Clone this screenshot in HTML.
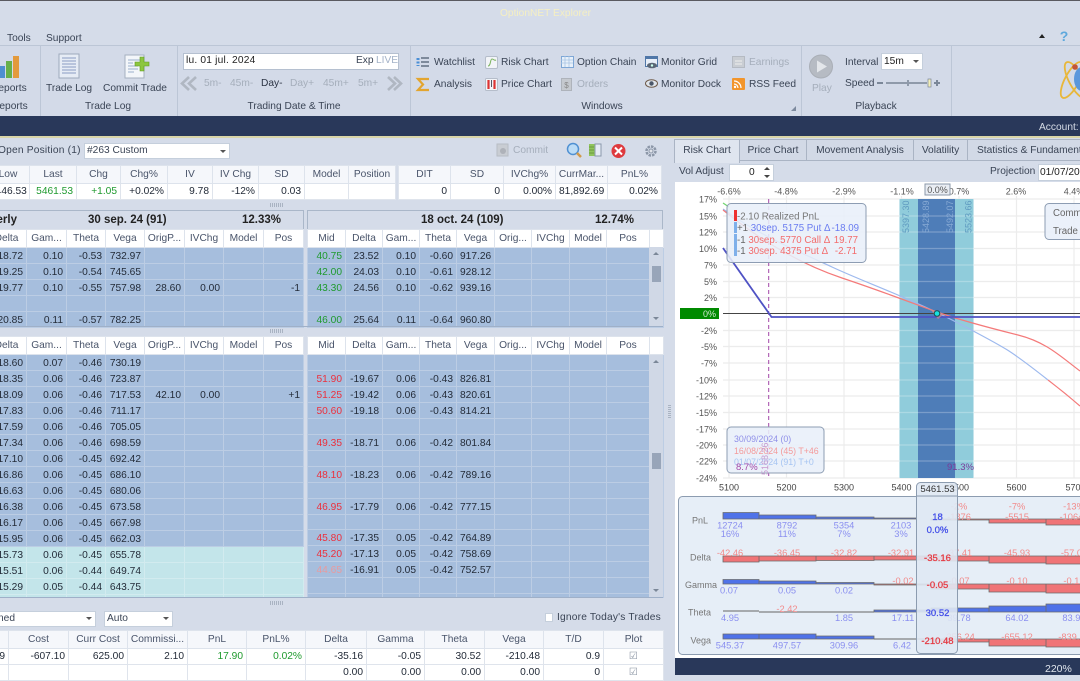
<!DOCTYPE html>
<html><head><meta charset="utf-8"><style>
*{box-sizing:border-box}
html,body{margin:0;padding:0}
body{width:1080px;height:675px;overflow:hidden;position:relative;background:#d5dce9;font:10.2px/12px "Liberation Sans",sans-serif;color:#3a4455}
.t{position:absolute;white-space:nowrap;line-height:12px;margin-top:2px}
.b{position:absolute}
.gr{color:#a5aebb}
.c{transform:translateX(-50%)}
table{position:absolute;border-collapse:collapse;table-layout:fixed;font:10.2px/12px "Liberation Sans",sans-serif;color:#232b38}
td,th{padding:0 3px;white-space:nowrap;overflow:hidden;height:16px;text-align:right;font-weight:normal}
th{text-align:center;background:#fff;color:#49546a;border:1px solid #dde3ec;height:18px;padding:0 1px}
.ch td{background:#a6bedd;border:1px solid #bccde4;padding-top:2px}
.ch2 td{padding-top:3px}
.ch tr.k td{background:#c3e5ea;border-color:#d2ebef}
.ch tr.s td{height:15px}
.ch tr.e td{height:5px;padding:0}
.w td{background:#fff;border:1px solid #dfe4ec}
.w th{background:#f5f7fb}
.g{color:#1f9a2e}.r{color:#ec2f3c}.p{color:#e99a9e}
.box{position:absolute;background:#fff;border:1px solid #b5c0d0}
.sp{position:absolute;width:13px;height:4px;background:repeating-linear-gradient(90deg,#a9b3c2 0 1px,transparent 1px 2px)}
.tab{position:absolute;top:139px;height:22px;border:1px solid #aab4c4;border-left:0;background:#d2d9e6;text-align:center;line-height:22px;color:#3a4455}
.tt{position:absolute;background:#d5dce9;border:1px solid #aab7c9;height:20px}
</style></head><body>

<!-- title / menu -->
<div class="b" style="left:0;top:0;width:1080px;height:1px;background:#5a5a60"></div>
<div class="t" style="left:500px;top:6px;color:#f5efc2">OptionNET Explorer</div>
<div class="t" style="left:7px;top:31px">Tools</div>
<div class="t" style="left:46px;top:31px">Support</div>
<div class="b" style="left:1039px;top:34px;border:3.5px solid transparent;border-top:0;border-bottom:4px solid #222"></div>
<svg class="b" style="left:1057px;top:29px" width="14" height="15"><text x="7" y="12" font-family="Liberation Sans" font-size="14" font-weight="bold" text-anchor="middle" fill="#5da8dc">?</text></svg>

<!-- ribbon -->
<div class="b" style="left:0;top:45px;width:1080px;height:1px;background:#bcc6d6"></div>
<div class="b" style="left:0;top:46px;width:1080px;height:70px;background:#d3dae8"></div>
<div class="b" style="left:40px;top:46px;width:1px;height:70px;background:#bcc6d6"></div>
<div class="b" style="left:177px;top:46px;width:1px;height:70px;background:#bcc6d6"></div>
<div class="b" style="left:410px;top:46px;width:1px;height:70px;background:#bcc6d6"></div>
<div class="b" style="left:801px;top:46px;width:1px;height:70px;background:#bcc6d6"></div>
<div class="b" style="left:951px;top:46px;width:1px;height:70px;background:#bcc6d6"></div>

<!-- ribbon icons -->
<svg class="b" style="left:0;top:0" width="1080" height="116">
<rect x="0" y="66" width="5" height="12" fill="#4f8fd0"/><rect x="6" y="61" width="6" height="17" fill="#68b04a"/><rect x="13" y="56" width="6" height="22" fill="#e39a3c"/>
<rect x="59" y="54" width="20" height="24" fill="#e6ecf5" stroke="#9eaabd"/>
<path d="M62 58h14M62 61h14M62 64h14M62 67h14M62 70h14M62 73h14" stroke="#8a9dc4"/>
<rect x="125" y="55" width="19" height="23" fill="#f3f6fa" stroke="#a5b0c0"/>
<path d="M128 60h13M128 63h5M128 66h10M128 69h10M128 72h6" stroke="#9bb0cc"/>
<path d="M140 57h4v5h5v4h-5v5h-4v-5h-5v-4h5z" fill="#8cc63f" stroke="#5f9a23" stroke-width=".6"/>
<!-- date icons -->
<rect x="327.500" y="56.500" width="10" height="10" fill="#f6f0ee" stroke="#a8b6cc"/><rect x="327" y="56" width="11" height="3" fill="#e87d6e"/><path d="M329 61h6M329 63h6" stroke="#8da7d4"/>
<rect x="342" y="56" width="11" height="11" fill="#b6bcc6"/><path d="M345 58v7M350 58v7M345 61h5" stroke="#fff"/>
<path d="M196 77l-7 6.500 7 6.500M189 77l-7 6.500 7 6.500" fill="none" stroke="#b0b7c2" stroke-width="2.600"/>
<path d="M388 77l7 6.500-7 6.500M394 77l7 6.500-7 6.500" fill="none" stroke="#b0b7c2" stroke-width="2.600"/>
<!-- watchlist -->
<path d="M418 58v8" stroke="#4a8fd6" stroke-width="3" stroke-dasharray="2 1.500"/><path d="M421 58h8M421 62h8M421 66h8" stroke="#4b5a6d" stroke-width="1.200"/>
<path d="M429 79h-11l5 5.500-5 5.500h11" fill="none" stroke="#e3a52f" stroke-width="2.200"/>
<!-- risk chart -->
<rect x="485.500" y="56.500" width="12" height="12" rx="1.500" fill="#f2f4f8" stroke="#b5bdca"/><path d="M488 66c3 0 2-7 4-7s2 2 4 1" fill="none" stroke="#7bb25e"/>
<rect x="485.500" y="78.500" width="12" height="12" rx="1" fill="#f2f4f8" stroke="#b5bdca"/><path d="M488.500 80v9M494.500 80v9" stroke="#d33" stroke-width="2.200"/><path d="M491.500 80v7" stroke="#556" />
<!-- option chain -->
<rect x="561.500" y="56.500" width="12" height="11" fill="#e7f0fa" stroke="#7ea7d6"/><path d="M561 60h12M561 63h12M565 56v11M569 56v11" stroke="#a8c3e3" stroke-width=".8"/>
<rect x="561.500" y="78.500" width="10" height="12" fill="#c5c9cf" stroke="#aeb3bb"/><text x="566.500" y="88" font-size="8" text-anchor="middle" fill="#888" font-family="Liberation Sans">$</text>
<!-- monitor grid -->
<rect x="645.500" y="56.500" width="12" height="10" fill="#e7eef8" stroke="#5077a8"/><rect x="645" y="56" width="13" height="3" fill="#5077a8"/><ellipse cx="652" cy="65.500" rx="5" ry="2.800" fill="#5a6675"/><circle cx="652" cy="65.500" r="1.200" fill="#cfe"/>
<ellipse cx="651.500" cy="83.500" rx="6" ry="3.800" fill="#dfe4ea" stroke="#6e5a49"/><circle cx="651.500" cy="83.500" r="2.200" fill="#4a5668"/>
<!-- earnings -->
<rect x="732.500" y="56.500" width="12" height="11" fill="#c9cdd3" stroke="#b5bac2"/><path d="M735 61h7M735 64h7" stroke="#eee"/>
<rect x="732" y="78" width="13" height="12" rx="1" fill="#f2952b"/><circle cx="735" cy="87" r="1.200" fill="#fff"/><path d="M734 84a4 4 0 0 1 4 4M734 81a7 7 0 0 1 7 7" fill="none" stroke="#fff" stroke-width="1.200"/>
<path d="M796 106v5h-5z" fill="#7d8a9e"/>
<!-- play -->
<circle cx="821" cy="66.500" r="11.500" fill="#b6bbc3" stroke="#a9aeb6"/><path d="M817 60.500l10 6-10 6z" fill="#e3e6ea"/>
<path d="M877 83h6" stroke="#7b8798" stroke-width="2"/><path d="M886 83h41" stroke="#8f9aaa" stroke-width="2"/><rect x="907" y="80" width="2" height="6" fill="#8f9aaa"/><rect x="928" y="79" width="3" height="8" fill="#f3efb8" stroke="#7b8798" stroke-width=".7"/>
<path d="M934 83h6M937 80v6" stroke="#7b8798" stroke-width="2"/>
<!-- logo -->
<ellipse cx="1072" cy="80" rx="20" ry="7" fill="none" stroke="#e8b73a" stroke-width="1.800" transform="rotate(-62 1072 80)"/>
<ellipse cx="1076" cy="80" rx="20" ry="7" fill="none" stroke="#e8b73a" stroke-width="1.800" transform="rotate(62 1076 80)"/>
<ellipse cx="1082" cy="79" rx="8" ry="12" fill="#5a97dc"/><circle cx="1075" cy="67" r="2.800" fill="#c2543a"/>
</svg>

<div class="t" style="left:-9px;top:81px">Reports</div><div class="t" style="left:-8px;top:99px">Reports</div>
<div class="t" style="left:46px;top:81px">Trade Log</div><div class="t" style="left:103px;top:81px">Commit Trade</div>
<div class="t c" style="left:108px;top:99px">Trade Log</div>
<div class="box" style="left:183px;top:53px;width:216px;height:17px"></div>
<div class="t" style="left:186px;top:53px;color:#222;letter-spacing:.2px">lu. 01 jul. 2024</div>
<div class="t" style="left:356px;top:53px">Exp</div><div class="t" style="left:376px;top:53px;color:#a3b2c8">LIVE</div>
<div class="t gr" style="left:204px;top:76px">5m-</div><div class="t gr" style="left:230px;top:76px">45m-</div><div class="t" style="left:261px;top:76px;color:#2c3444">Day-</div><div class="t gr" style="left:290px;top:76px">Day+</div><div class="t gr" style="left:323px;top:76px">45m+</div><div class="t gr" style="left:358px;top:76px">5m+</div>
<div class="t c" style="left:294px;top:99px">Trading Date &amp; Time</div>
<div class="t" style="left:434px;top:55px">Watchlist</div><div class="t" style="left:434px;top:77px">Analysis</div>
<div class="t" style="left:501px;top:55px">Risk Chart</div><div class="t" style="left:501px;top:77px">Price Chart</div>
<div class="t" style="left:577px;top:55px">Option Chain</div><div class="t gr" style="left:577px;top:77px">Orders</div>
<div class="t" style="left:661px;top:55px">Monitor Grid</div><div class="t" style="left:661px;top:77px">Monitor Dock</div>
<div class="t gr" style="left:749px;top:55px">Earnings</div><div class="t" style="left:749px;top:77px">RSS Feed</div>
<div class="t c" style="left:602px;top:99px">Windows</div>
<div class="t gr" style="left:812px;top:81px">Play</div>
<div class="t" style="left:845px;top:55px">Interval</div><div class="t" style="left:845px;top:76px">Speed</div>
<div class="box" style="left:881px;top:53px;width:42px;height:17px;border-color:#c5cfdc"></div><div class="t" style="left:884px;top:54px;color:#222">15m</div>
<div class="b" style="left:913px;top:60px;border:3px solid transparent;border-top:3px solid #555;border-bottom:0"></div>
<div class="t c" style="left:876px;top:99px">Playback</div>

<!-- navy bar -->
<div class="b" style="left:0;top:116px;width:1080px;height:20px;background:#29385a"></div>
<div class="b" style="left:0;top:136px;width:1080px;height:2px;background:#d9d5a8"></div>
<div class="t" style="left:1039px;top:120px;color:#d6dce6">Account:</div>

<!-- position toolbar -->
<div class="t" style="left:-2px;top:143px;letter-spacing:.2px">Open Position (1)</div>
<div class="box" style="left:84px;top:143px;width:146px;height:16px;border-color:#c5cfdc"></div>
<div class="t" style="left:87px;top:143px">#263 Custom</div>
<div class="b" style="left:220px;top:150px;border:3px solid transparent;border-top:3px solid #555;border-bottom:0"></div>
<svg class="b" style="left:490px;top:140px" width="175" height="22">
<rect x="7" y="4" width="11" height="12" fill="#c9cdd3" stroke="#b8bdc4"/><circle cx="13" cy="11" r="3" fill="#aeb2b9"/>
<circle cx="83" cy="9" r="5.500" fill="#bcdcf6" stroke="#4f90d2" stroke-width="1.500"/><path d="M87 13l4 4" stroke="#d19a4a" stroke-width="2.500"/>
<rect x="99" y="4" width="6" height="12" fill="#8fc45c"/><rect x="105" y="4" width="6" height="12" fill="#e6ecf5" stroke="#8a98ac"/><path d="M99 7h5M99 10h5M99 13h5" stroke="#6e9a3f"/>
<circle cx="128.500" cy="11" r="7" fill="#de3a3e"/><path d="M125 7.500l7 7M132 7.500l-7 7" stroke="#fff" stroke-width="2"/>
<circle cx="161" cy="11" r="4.500" fill="none" stroke="#8c97a8" stroke-width="2.500" stroke-dasharray="2.500 1"/><circle cx="161" cy="11" r="2" fill="#dfe3ea" stroke="#8c97a8"/>
</svg>
<div class="t gr" style="left:513px;top:143px">Commit</div>

<!-- summary tables -->
<table class="w" style="left:-14px;top:165px;width:409px">
<colgroup><col style="width:43px"><col style="width:47px"><col style="width:44px"><col style="width:47px"><col style="width:45px"><col style="width:46px"><col style="width:46px"><col style="width:44px"><col style="width:47px"></colgroup>
<tr><th>Low<th>Last<th>Chg<th>Chg%<th>IV<th>IV Chg<th>SD<th>Model<th>Position</tr>
<tr><td>5446.53<td class="g">5461.53<td class="g">+1.05<td>+0.02%<td>9.78<td>-12%<td>0.03<td><td></tr>
</table>
<table class="w" style="left:398px;top:165px;width:263px">
<colgroup><col style="width:52px"><col style="width:53px"><col style="width:52px"><col style="width:52px"><col style="width:54px"></colgroup>
<tr><th>DIT<th>SD<th>IVChg%<th>CurrMar...<th>PnL%</tr>
<tr><td>0<td>0<td>0.00%<td>81,892.69<td>0.02%</tr>
</table>
<div class="sp" style="left:270px;top:203px"></div>

<!-- chain titles -->
<div class="tt" style="left:-2px;top:210px;width:306px"></div>
<div class="tt" style="left:307px;top:210px;width:356px"></div>
<div class="t" style="right:1063px;top:212px;font-weight:bold;font-size:11.500px;color:#222">Quarterly</div>
<div class="t" style="left:88px;top:212px;font-weight:bold;font-size:11.500px;color:#222">30 sep. 24 (91)</div>
<div class="t" style="left:242px;top:212px;font-weight:bold;font-size:11.500px;color:#222">12.33%</div>
<div class="t" style="left:421px;top:212px;font-weight:bold;font-size:11.500px;color:#222">18 oct. 24 (109)</div>
<div class="t" style="left:595px;top:212px;font-weight:bold;font-size:11.500px;color:#222">12.74%</div>

<!-- chain top left -->
<table class="ch" style="left:-14px;top:229px;width:317px">
<colgroup><col style="width:40px"><col style="width:40px"><col style="width:39px"><col style="width:39px"><col style="width:40px"><col style="width:39px"><col style="width:40px"><col style="width:40px"></colgroup>
<tr><th>Delta<th>Gam...<th>Theta<th>Vega<th>OrigP...<th>IVChg<th>Model<th>Pos</tr>
<tr><td>18.72<td>0.10<td>-0.53<td>732.97<td><td><td><td></tr>
<tr><td>19.25<td>0.10<td>-0.54<td>745.65<td><td><td><td></tr>
<tr><td>19.77<td>0.10<td>-0.55<td>757.98<td>28.60<td>0.00<td><td>-1</tr>
<tr><td><td><td><td><td><td><td><td></tr>
<tr><td>20.85<td>0.11<td>-0.57<td>782.25<td><td><td><td></tr>
</table>
<!-- chain top right -->
<table class="ch" style="left:307px;top:229px;width:356px">
<colgroup><col style="width:38px"><col style="width:37px"><col style="width:37px"><col style="width:37px"><col style="width:38px"><col style="width:37px"><col style="width:38px"><col style="width:37px"><col style="width:43px"><col style="width:14px"></colgroup>
<tr><th>Mid<th>Delta<th>Gam...<th>Theta<th>Vega<th>Orig...<th>IVChg<th>Model<th>Pos<th></tr>
<tr><td class="g">40.75<td>23.52<td>0.10<td>-0.60<td>917.26<td><td><td><td><td></tr>
<tr><td class="g">42.00<td>24.03<td>0.10<td>-0.61<td>928.12<td><td><td><td><td></tr>
<tr><td class="g">43.30<td>24.56<td>0.10<td>-0.62<td>939.16<td><td><td><td><td></tr>
<tr><td><td><td><td><td><td><td><td><td><td></tr>
<tr><td class="g">46.00<td>25.64<td>0.11<td>-0.64<td>960.80<td><td><td><td><td></tr>
</table>
<div class="b" style="left:649px;top:247px;width:14px;height:79px;background:#d0d8e6"></div>
<div class="b" style="left:652px;top:266px;width:9px;height:16px;background:#98a5b9"></div>
<div class="b" style="left:653px;top:252px;border:3px solid transparent;border-top:0;border-bottom:3px solid #7b8798"></div>
<div class="b" style="left:653px;top:317px;border:3px solid transparent;border-bottom:0;border-top:3px solid #7b8798"></div>
<div class="b" style="left:-2px;top:326px;width:665px;height:1px;background:#9fb0c8"></div>
<div class="sp" style="left:270px;top:329px"></div>

<!-- chain bottom left -->
<table class="ch ch2" style="left:-14px;top:336px;width:317px">
<colgroup><col style="width:40px"><col style="width:40px"><col style="width:39px"><col style="width:39px"><col style="width:40px"><col style="width:39px"><col style="width:40px"><col style="width:40px"></colgroup>
<tr><th>Delta<th>Gam...<th>Theta<th>Vega<th>OrigP...<th>IVChg<th>Model<th>Pos</tr>
<tr><td>-18.60<td>0.07<td>-0.46<td>730.19<td><td><td><td></tr>
<tr><td>-18.35<td>0.06<td>-0.46<td>723.87<td><td><td><td></tr>
<tr><td>-18.09<td>0.06<td>-0.46<td>717.53<td>42.10<td>0.00<td><td>+1</tr>
<tr><td>-17.83<td>0.06<td>-0.46<td>711.17<td><td><td><td></tr>
<tr><td>-17.59<td>0.06<td>-0.46<td>705.05<td><td><td><td></tr>
<tr><td>-17.34<td>0.06<td>-0.46<td>698.59<td><td><td><td></tr>
<tr><td>-17.10<td>0.06<td>-0.45<td>692.42<td><td><td><td></tr>
<tr><td>-16.86<td>0.06<td>-0.45<td>686.10<td><td><td><td></tr>
<tr><td>-16.63<td>0.06<td>-0.45<td>680.06<td><td><td><td></tr>
<tr><td>-16.38<td>0.06<td>-0.45<td>673.58<td><td><td><td></tr>
<tr class="s"><td>-16.17<td>0.06<td>-0.45<td>667.98<td><td><td><td></tr>
<tr><td>-15.95<td>0.06<td>-0.45<td>662.03<td><td><td><td></tr>
<tr class="k"><td>-15.73<td>0.06<td>-0.45<td>655.78<td><td><td><td></tr>
<tr class="k"><td>-15.51<td>0.06<td>-0.44<td>649.74<td><td><td><td></tr>
<tr class="k"><td>-15.29<td>0.05<td>-0.44<td>643.75<td><td><td><td></tr>
<tr class="k e"><td><td><td><td><td><td><td><td></tr>
</table>
<!-- chain bottom right -->
<table class="ch ch2" style="left:307px;top:336px;width:356px">
<colgroup><col style="width:38px"><col style="width:37px"><col style="width:37px"><col style="width:37px"><col style="width:38px"><col style="width:37px"><col style="width:38px"><col style="width:37px"><col style="width:43px"><col style="width:14px"></colgroup>
<tr><th>Mid<th>Delta<th>Gam...<th>Theta<th>Vega<th>Orig...<th>IVChg<th>Model<th>Pos<th></tr>
<tr><td><td><td><td><td><td><td><td><td><td></tr>
<tr><td class="r">51.90<td>-19.67<td>0.06<td>-0.43<td>826.81<td><td><td><td><td></tr>
<tr><td class="r">51.25<td>-19.42<td>0.06<td>-0.43<td>820.61<td><td><td><td><td></tr>
<tr><td class="r">50.60<td>-19.18<td>0.06<td>-0.43<td>814.21<td><td><td><td><td></tr>
<tr><td><td><td><td><td><td><td><td><td><td></tr>
<tr><td class="r">49.35<td>-18.71<td>0.06<td>-0.42<td>801.84<td><td><td><td><td></tr>
<tr><td><td><td><td><td><td><td><td><td><td></tr>
<tr><td class="r">48.10<td>-18.23<td>0.06<td>-0.42<td>789.16<td><td><td><td><td></tr>
<tr><td><td><td><td><td><td><td><td><td><td></tr>
<tr><td class="r">46.95<td>-17.79<td>0.06<td>-0.42<td>777.15<td><td><td><td><td></tr>
<tr class="s"><td><td><td><td><td><td><td><td><td><td></tr>
<tr><td class="r">45.80<td>-17.35<td>0.05<td>-0.42<td>764.89<td><td><td><td><td></tr>
<tr><td class="r">45.20<td>-17.13<td>0.05<td>-0.42<td>758.69<td><td><td><td><td></tr>
<tr><td class="p">44.65<td>-16.91<td>0.05<td>-0.42<td>752.57<td><td><td><td><td></tr>
<tr><td><td><td><td><td><td><td><td><td><td></tr>
<tr class="e"><td><td><td><td><td><td><td><td><td><td></tr>
</table>
<div class="b" style="left:649px;top:355px;width:14px;height:243px;background:#d0d8e6"></div>
<div class="b" style="left:652px;top:453px;width:9px;height:16px;background:#98a5b9"></div>
<div class="b" style="left:653px;top:360px;border:3px solid transparent;border-top:0;border-bottom:3px solid #7b8798"></div>
<div class="b" style="left:653px;top:589px;border:3px solid transparent;border-bottom:0;border-top:3px solid #7b8798"></div>
<div class="b" style="left:-2px;top:597px;width:665px;height:1px;background:#9fb0c8"></div>
<div class="b" style="left:-2px;top:598px;width:677px;height:13px;background:#d5dce9"></div>
<div class="sp" style="left:270px;top:601px"></div>
<div class="b" style="left:668px;top:405px;width:3px;height:13px;background:repeating-linear-gradient(0deg,#a9b3c2 0 1px,transparent 1px 2px)"></div>

<!-- bottom controls -->
<div class="box" style="left:-2px;top:611px;width:98px;height:16px;border-color:#c5cfdc"></div>
<div class="t" style="right:1065px;top:611px">Combined</div>
<div class="b" style="left:86px;top:617px;border:3px solid transparent;border-top:3px solid #555;border-bottom:0"></div>
<div class="box" style="left:104px;top:611px;width:69px;height:16px;border-color:#c5cfdc"></div>
<div class="t" style="left:107px;top:611px">Auto</div>
<div class="b" style="left:163px;top:617px;border:3px solid transparent;border-top:3px solid #555;border-bottom:0"></div>
<div class="box" style="left:545px;top:613px;width:8px;height:9px;border-color:#c5cfdc"></div>
<div class="t" style="left:557px;top:610px;letter-spacing:.2px">Ignore Today's Trades</div>

<!-- bottom grid -->
<table class="w" style="left:-52px;top:630px;width:715px">
<colgroup><col style="width:60px"><col style="width:60px"><col style="width:59px"><col style="width:60px"><col style="width:59px"><col style="width:59px"><col style="width:61px"><col style="width:58px"><col style="width:60px"><col style="width:59px"><col style="width:60px"><col style="width:60px"></colgroup>
<tr><th>Price<th>Cost<th>Curr Cost<th>Commissi...<th>PnL<th>PnL%<th>Delta<th>Gamma<th>Theta<th>Vega<th>T/D<th>Plot</tr>
<tr><td>619<td>-607.10<td>625.00<td>2.10<td class="g">17.90<td class="g">0.02%<td>-35.16<td>-0.05<td>30.52<td>-210.48<td>0.9<td style="text-align:center;color:#8a94a3">&#9745;</tr>
<tr><td><td><td><td><td><td><td>0.00<td>0.00<td>0.00<td>0.00<td>0<td style="text-align:center;color:#8a94a3">&#9745;</tr>
</table>

<!-- right panel -->
<div class="b" style="left:674px;top:139px;width:406px;height:43px;background:#d5dce9"></div>
<div class="tab" style="left:674px;width:66px;height:24px;background:#dfe5ef;border-bottom:0;border-left:1px solid #aab4c4">Risk Chart</div>
<div class="tab" style="left:740px;width:67px">Price Chart</div>
<div class="tab" style="left:807px;width:107px">Movement Analysis</div>
<div class="tab" style="left:914px;width:54px">Volatility</div>
<div class="tab" style="left:968px;width:140px;text-align:left;padding-left:9px">Statistics &amp; Fundamentals</div>
<div class="t" style="left:679px;top:164px">Vol Adjust</div>
<div class="box" style="left:729px;top:164px;width:45px;height:17px;border-color:#c5cfdc"></div>
<div class="t" style="left:749px;top:165px;color:#222">0</div>
<div class="b" style="left:764px;top:167px;border:3px solid transparent;border-top:0;border-bottom:3px solid #444"></div>
<div class="b" style="left:764px;top:175px;border:3px solid transparent;border-bottom:0;border-top:3px solid #444"></div>
<div class="t" style="left:990px;top:164px">Projection</div>
<div class="box" style="left:1038px;top:164px;width:70px;height:17px;border-color:#c5cfdc"></div>
<div class="t" style="left:1040px;top:165px;color:#222">01/07/2024</div>

<svg class="b" style="left:0;top:0" width="1080" height="675" font-family="Liberation Sans" font-size="9">
<rect x="675" y="182" width="405" height="476" fill="#fff"/>
<!-- grid -->
<g stroke="#ececec" stroke-width="1.200">
<path d="M723 199H1080M723 216H1080M723 232H1080M723 248.500H1080M723 265H1080M723 281.500H1080M723 297.500H1080M723 330.500H1080M723 346.500H1080M723 363H1080M723 380H1080M723 396H1080M723 412.500H1080M723 429H1080M723 445H1080M723 461H1080M723 478H1080"/>
<path d="M729 196V478M786.500 196V478M844 196V478M901.500 196V478M959 196V478M1016.500 196V478M1074 196V478"/>
</g>
<!-- bands -->
<rect x="899" y="199" width="75" height="279" fill="#c5e4ec"/>
<rect x="900" y="199" width="73" height="279" fill="#90ccdb"/>
<rect x="918" y="199" width="37" height="279" fill="#4e7db8"/>
<g stroke="#fff" stroke-opacity=".25" stroke-width="1.200"><path d="M899 216H974M899 232H974M899 248.500H974M899 265H974M899 281.500H974M899 297.500H974M899 330.500H974M899 346.500H974M899 363H974M899 380H974M899 396H974M899 412.500H974M899 429H974M899 445H974M899 461H974"/></g>
<g>
<text transform="translate(909,233) rotate(-90)" fill="#5f9bc0">5397.30</text>
<text transform="translate(929,233) rotate(-90)" fill="#86a9d4">5428.89</text>
<text transform="translate(953,233) rotate(-90)" fill="#86a9d4">5492.07</text>
<text transform="translate(971.500,233) rotate(-90)" fill="#5f9bc0">5523.66</text>
</g>
<!-- y labels -->
<g fill="#555" text-anchor="end">
<text x="717" y="202.500">17%</text><text x="717" y="219.500">15%</text><text x="717" y="235.500">12%</text><text x="717" y="252">10%</text><text x="717" y="268.500">7%</text><text x="717" y="285">5%</text><text x="717" y="301">2%</text><text x="717" y="334">-2%</text><text x="717" y="350">-5%</text><text x="717" y="366.500">-7%</text><text x="717" y="383.500">-10%</text><text x="717" y="399.500">-12%</text><text x="717" y="416">-15%</text><text x="717" y="432.500">-17%</text><text x="717" y="448.500">-20%</text><text x="717" y="464.500">-22%</text><text x="717" y="481.500">-24%</text>
</g>
<rect x="680" y="308" width="39" height="11" fill="#008a00"/><text x="716" y="317" text-anchor="end" fill="#cfe8cf">0%</text>
<!-- top axis -->
<g fill="#555" text-anchor="middle">
<text x="729" y="194.500">-6.6%</text><text x="786" y="194.500">-4.8%</text><text x="844" y="194.500">-2.9%</text><text x="902" y="194.500">-1.1%</text><text x="959" y="194.500">0.7%</text><text x="1016" y="194.500">2.6%</text><text x="1074" y="194.500">4.4%</text>
</g>
<rect x="925" y="184" width="25" height="11" fill="#e9edf3" stroke="#8b98aa"/><text x="937.500" y="193" text-anchor="middle" fill="#555">0.0%</text>
<!-- lines -->
<path d="M768.700 199V478" stroke="#a347a8" stroke-width="1" stroke-dasharray="4 3"/>
<path d="M723 313.500H1080" stroke="#444" stroke-width="1"/>
<path d="M723 209C760 236 800 252 832 267S910 298 958 323S1010 350 1048 380" fill="none" stroke="#9db9ee" stroke-width="1.200"/>
<path d="M1048 380Q1065 393 1080 406" fill="none" stroke="#f47a7a" stroke-width="1.200"/>
<path d="M723 210C760 240 800 264 842 278S920 306 937 312S990 328 1018 335S1060 356 1080 371" fill="none" stroke="#f47a7a" stroke-width="1.200"/>
<path d="M723 248L771.500 317H1080" fill="none" stroke="#4f52c4" stroke-width="1.800"/>
<path d="M930 309l8 3 6 2-6 5z" fill="#d08a8a" opacity=".7"/>
<circle cx="937" cy="313.500" r="2.800" fill="#18e0e0" stroke="#1b4f4f" stroke-width="1"/>
<path d="M723 203l6 4" stroke="#6ed46e" stroke-width="1.200"/>
<!-- legend 1 -->
<g font-size="9.700">
<rect x="727" y="203.500" width="139" height="59" rx="4" fill="#e8eff9" fill-opacity=".87" stroke="#8d9db3"/>
<rect x="734" y="210" width="3" height="11" fill="#ee3030"/><rect x="734" y="222" width="3" height="11" fill="#7fb0ea"/><rect x="734" y="234" width="3" height="11" fill="#7fb0ea"/>
<rect x="734" y="245" width="3" height="11" fill="#7fb0ea"/>
<text x="737" y="219.500" fill="#777">-2.10 Realized PnL</text>
<text x="737" y="231" fill="#666">+1 <tspan fill="#6a7cf0">30sep. 5175 Put &#916;</tspan></text><text x="859" y="231" text-anchor="end" fill="#6a7cf0">-18.09</text>
<text x="737" y="243" fill="#666">-1 <tspan fill="#f36c6c">30sep. 5770 Call &#916;</tspan></text><text x="858" y="243" text-anchor="end" fill="#f36c6c">19.77</text>
<text x="737" y="254" fill="#666">-1 <tspan fill="#f36c6c">30sep. 4375 Put &#916;</tspan></text><text x="857" y="254" text-anchor="end" fill="#f36c6c">-2.71</text>
</g>
<!-- legend right -->
<rect x="1045" y="203.500" width="50" height="36" rx="4" fill="#e8eff9" fill-opacity=".87" stroke="#8d9db3"/>
<text x="1053" y="216" fill="#666" font-size="9.700">Comm</text><text x="1053" y="234" fill="#666" font-size="9.700">Trade C</text>
<!-- legend 2 -->
<rect x="727" y="427" width="97" height="46" rx="4" fill="#e8eff9" fill-opacity=".87" stroke="#8d9db3"/>
<g font-size="8.800">
<text x="734" y="442" fill="#8f8fe8">30/09/2024 (0)</text>
<text x="734" y="454" fill="#f49a9a">16/08/2024 (45) T+46</text>
<text x="734" y="465" fill="#a6c4f2">01/07/2024 (91) T+0</text>
</g>
<text transform="translate(768,475) rotate(-90)" fill="#c79bd0">5168.26</text>
<text x="736" y="470" fill="#a347a8" font-size="9.500">8.7%</text>
<text x="947" y="470" fill="#7a3a9a" font-size="9.500">91.3%</text>
<!-- x labels -->
<g fill="#444" text-anchor="middle">
<text x="729" y="490.500">5100</text><text x="786.500" y="490.500">5200</text><text x="844" y="490.500">5300</text><text x="901.500" y="490.500">5400</text><text x="959" y="490.500">5500</text><text x="1016.500" y="490.500">5600</text><text x="1075.500" y="490.500">5700</text>
</g>
<!-- lower panel -->
<rect x="678.500" y="496.500" width="420" height="158" rx="4" fill="#e6eef7" stroke="#8c9cb0"/>
<g fill="#777" text-anchor="end"><text x="708" y="523.500">PnL</text><text x="711" y="560.500">Delta</text><text x="717" y="588">Gamma</text><text x="711" y="615.500">Theta</text><text x="711" y="643.500">Vega</text></g>
<g stroke="#6b6b6b" stroke-width=".8" fill="#4f72e8">
<path d="M723 512.500h36V519h-36zM759 515h57v4h-57zM816 517h58v2h-58zM874 518h42v1h-42z"/>
<path d="M723 579.500h36v4.500h-36zM759 581h57v3h-57zM816 582.500h58v1.500h-58z"/>
<path d="M874 610h57v2h-57zM931 608h58v4h-58zM989 606h57v6h-57zM1046 604h40v8h-40z"/>
<path d="M723 634h36v5h-36zM759 634h57v5h-57zM816 636h58v3h-58z"/>
</g>
<g stroke="#6b6b6b" stroke-width=".8" fill="#f07477">
<path d="M931 519h58v1h-58zM989 519h57v4h-57zM1046 519h40v6h-40z"/>
<path d="M723 556h36v6h-36zM759 556h57v5h-57zM816 556h58v4.500h-58zM874 556h57v4h-57zM931 556h58v5h-58zM989 556h57v7h-57zM1046 556h40v8h-40z"/>
<path d="M874 584h57v1h-57zM931 584h58v5h-58zM989 584h57v8h-57zM1046 584h40v9h-40z"/>
<path d="M931 639h58v3h-58zM989 639h57v7h-57zM1046 639h40v8h-40z"/>
</g>
<path d="M723 611h36M759 612h115M874 639h57" stroke="#666" fill="none"/>
<g text-anchor="middle" fill="#8a8ff0" font-size="9.300">
<text x="730" y="528.500">12724</text><text x="730" y="537">16%</text><text x="787" y="528.500">8792</text><text x="787" y="537">11%</text><text x="844" y="528.500">5354</text><text x="844" y="537">7%</text><text x="901" y="528.500">2103</text><text x="901" y="537">3%</text>
<text x="729" y="593.500">0.07</text><text x="787" y="593.500">0.05</text><text x="844" y="593.500">0.02</text>
<text x="730" y="621">4.95</text><text x="844" y="621">1.85</text><text x="903" y="621">17.11</text><text x="959" y="621">39.78</text><text x="1017" y="621">64.02</text><text x="1074" y="621">83.92</text>
<text x="730" y="648.500">545.37</text><text x="787" y="648.500">497.57</text><text x="844" y="648.500">309.96</text><text x="902" y="648.500">6.42</text>
</g>
<g text-anchor="middle" fill="#f28a8a" font-size="9.300">
<text x="959" y="509.500">-2%</text><text x="1017" y="509.500">-7%</text><text x="1074" y="509.500">-13%</text>
<text x="959" y="520">-1876</text><text x="1017" y="520">-5515</text><text x="1074" y="520">-10647</text>
<text x="730" y="556">-42.46</text><text x="787" y="556">-36.45</text><text x="844" y="556">-32.82</text><text x="901" y="556">-32.91</text><text x="959" y="556">-37.41</text><text x="1017" y="556">-45.93</text><text x="1074" y="556">-57.03</text>
<text x="903" y="584">-0.02</text><text x="959" y="584">-0.07</text><text x="1017" y="584">-0.10</text><text x="1074" y="584">-0.12</text>
<text x="787" y="612">-2.42</text>
<text x="959" y="640">-356.24</text><text x="1017" y="640">-655.12</text><text x="1074" y="640">-839.12</text>
</g>
<!-- marker -->
<rect x="916.500" y="482.500" width="41" height="171" rx="4" fill="#dfe8f3" fill-opacity=".9" stroke="#8c9cb0"/>
<path d="M917 496H957" stroke="#8c9cb0"/>
<text x="937.500" y="492" text-anchor="middle" fill="#333" font-size="9.500">5461.53</text>
<g text-anchor="middle" font-size="9.500" stroke-width=".25">
<text x="937.500" y="520" fill="#3f4be8" stroke="#3f4be8">18</text><text x="937.500" y="533" fill="#3f4be8" stroke="#3f4be8">0.0%</text>
<text x="937.500" y="561" fill="#e53840" stroke="#e53840">-35.16</text><text x="937.500" y="588" fill="#e53840" stroke="#e53840">-0.05</text>
<text x="937.500" y="616" fill="#3f4be8" stroke="#3f4be8">30.52</text><text x="937.500" y="644" fill="#e53840" stroke="#e53840">-210.48</text>
</g>
<rect x="675" y="658" width="405" height="17" fill="#29385a"/>
<text x="1045" y="672" fill="#dfe4ec" font-size="10.500">220%</text>
</svg>
</body></html>
